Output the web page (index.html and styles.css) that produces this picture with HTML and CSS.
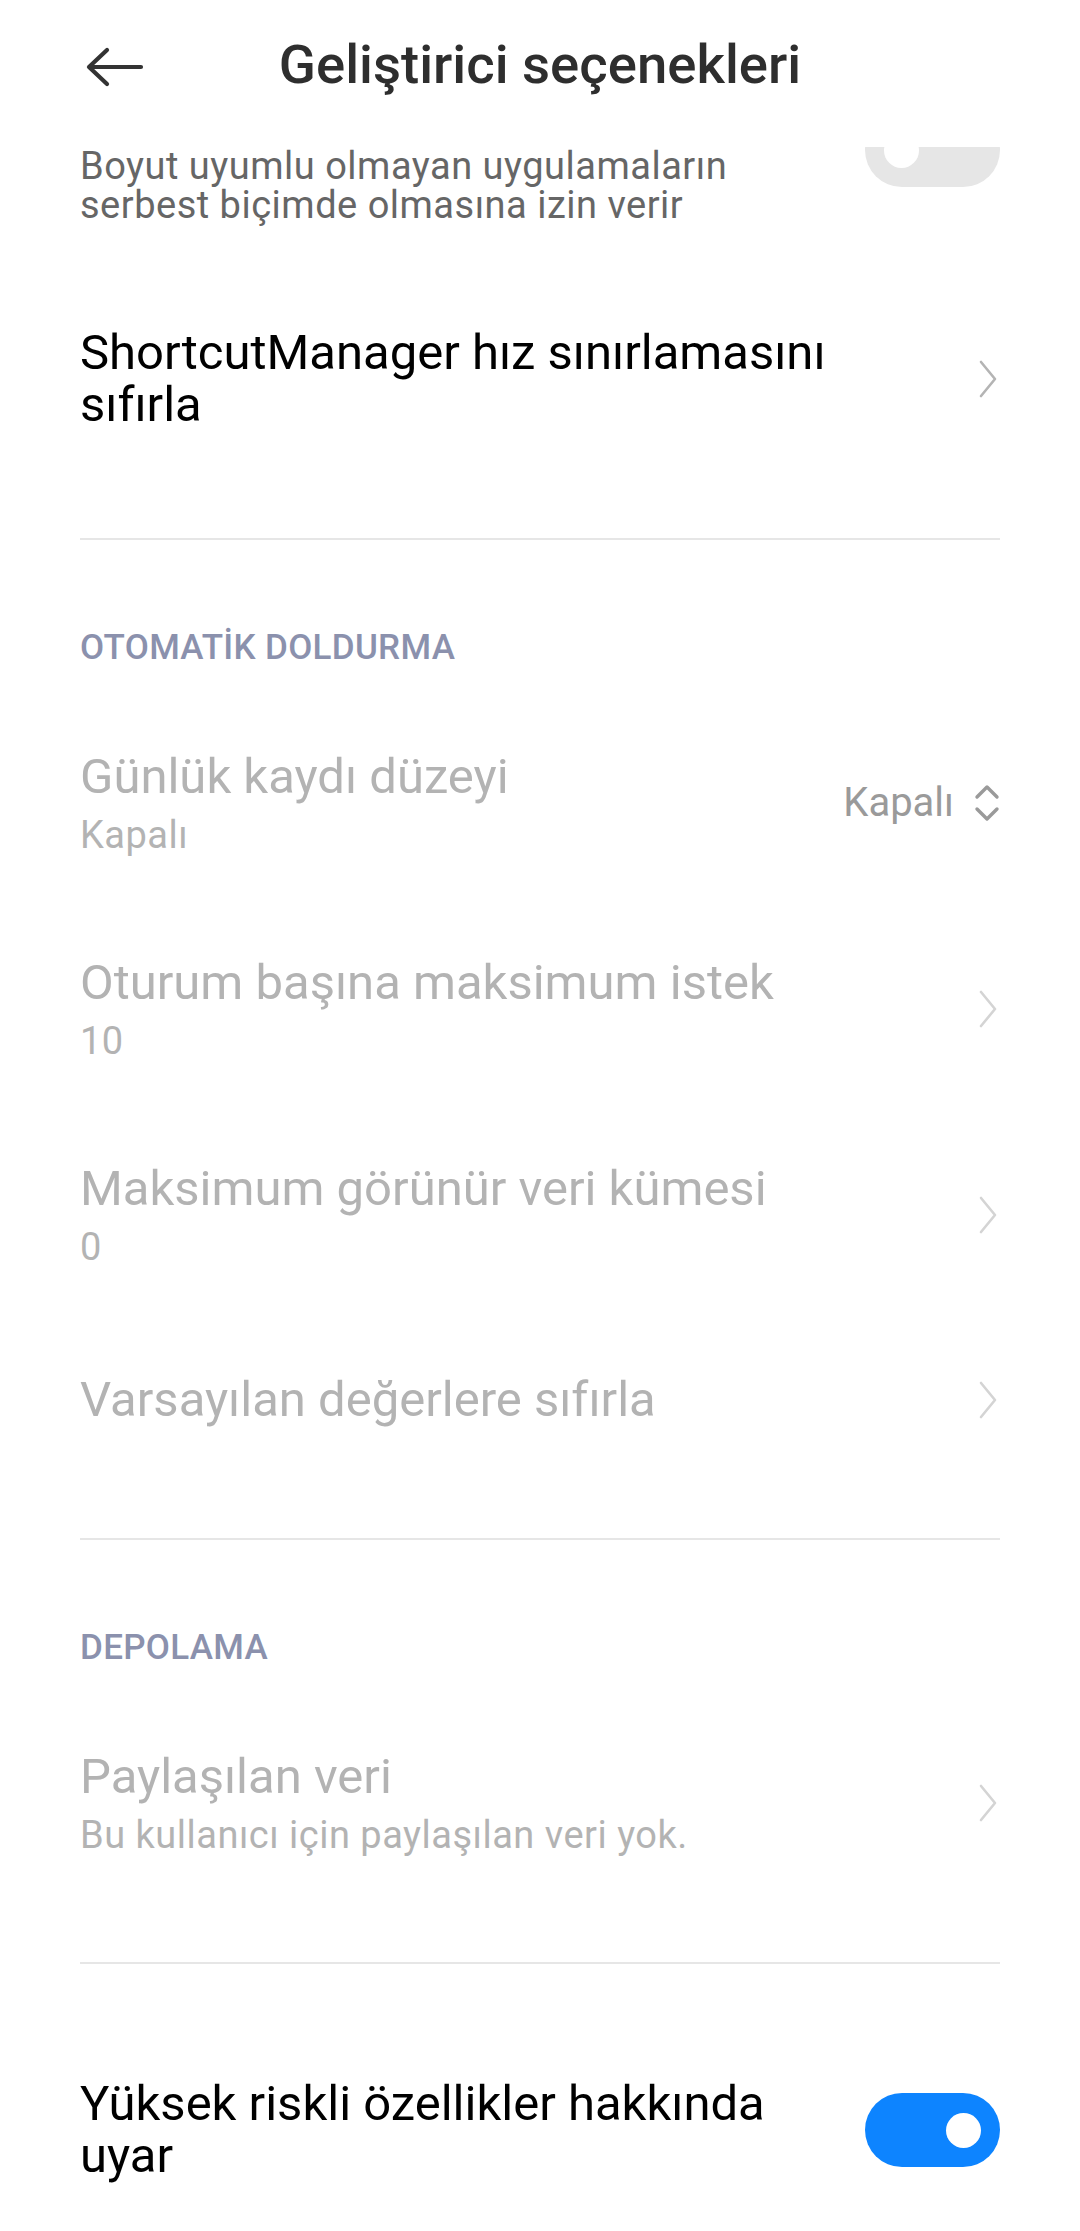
FILE: index.html
```html
<!DOCTYPE html>
<html lang="tr">
<head>
<meta charset="utf-8">
<title>Geliştirici seçenekleri</title>
<link rel="stylesheet" href="styles.css">
</head>
<body>
<div class="screen">
  <header class="appbar">
    <div class="appbar-left">
      <svg class="back" width="58" height="40" viewBox="0 0 58 40" aria-label="Geri">
        <path d="M3 20 H55 M21 3 L3 20 L21 37" fill="none" stroke="#333333" stroke-width="4.2" stroke-linecap="round" stroke-linejoin="round"/>
      </svg>
    </div>
    <h1 class="appbar-title">Geliştirici seçenekleri</h1>
    <div class="appbar-right"></div>
  </header>

  <main class="viewport">
    <div class="list">
      <section class="section">
        <div class="row row-first">
          <div class="row-text">
            <div class="row-sub">Boyut uyumlu olmayan uygulamaların serbest biçimde olmasına izin verir</div>
          </div>
          <div class="toggle toggle-off"><span class="knob"></span></div>
        </div>
        <div class="row row-nav">
          <div class="row-text">
            <div class="row-title">ShortcutManager hız sınırlamasını sıfırla</div>
          </div>
          <svg class="chev chev-active" width="22" height="38" viewBox="0 0 22 38"><path d="M4 2 L18 19 L4 36" fill="none" stroke-width="2.6" stroke-linecap="round" stroke-linejoin="round"/></svg>
        </div>
      </section>
      <hr class="divider">

      <section class="section">
        <h2 class="section-head">OTOMATİK DOLDURMA</h2>
        <div class="row disabled">
          <div class="row-text">
            <div class="row-title">Günlük kaydı düzeyi</div>
            <div class="row-sub">Kapalı</div>
          </div>
          <div class="row-value">
            <span class="value-text">Kapalı</span>
            <svg class="updown" width="26" height="40" viewBox="0 0 26 40"><path d="M3 14 L13 4 L23 14 M3 26 L13 36 L23 26" fill="none" stroke="#9a9a9a" stroke-width="3.4" stroke-linecap="round" stroke-linejoin="round"/></svg>
          </div>
        </div>
        <div class="row row-nav disabled">
          <div class="row-text">
            <div class="row-title">Oturum başına maksimum istek</div>
            <div class="row-sub">10</div>
          </div>
          <svg class="chev" width="22" height="38" viewBox="0 0 22 38"><path d="M4 2 L18 19 L4 36" fill="none" stroke-width="2.6" stroke-linecap="round" stroke-linejoin="round"/></svg>
        </div>
        <div class="row row-nav disabled">
          <div class="row-text">
            <div class="row-title">Maksimum görünür veri kümesi</div>
            <div class="row-sub">0</div>
          </div>
          <svg class="chev" width="22" height="38" viewBox="0 0 22 38"><path d="M4 2 L18 19 L4 36" fill="none" stroke-width="2.6" stroke-linecap="round" stroke-linejoin="round"/></svg>
        </div>
        <div class="row row-nav row-single disabled">
          <div class="row-text">
            <div class="row-title">Varsayılan değerlere sıfırla</div>
          </div>
          <svg class="chev" width="22" height="38" viewBox="0 0 22 38"><path d="M4 2 L18 19 L4 36" fill="none" stroke-width="2.6" stroke-linecap="round" stroke-linejoin="round"/></svg>
        </div>
      </section>
      <hr class="divider">

      <section class="section">
        <h2 class="section-head">DEPOLAMA</h2>
        <div class="row row-nav disabled">
          <div class="row-text">
            <div class="row-title">Paylaşılan veri</div>
            <div class="row-sub">Bu kullanıcı için paylaşılan veri yok.</div>
          </div>
          <svg class="chev" width="22" height="38" viewBox="0 0 22 38"><path d="M4 2 L18 19 L4 36" fill="none" stroke-width="2.6" stroke-linecap="round" stroke-linejoin="round"/></svg>
        </div>
      </section>
      <hr class="divider">

      <section class="section section-plain">
        <div class="row">
          <div class="row-text">
            <div class="row-title">Yüksek riskli özellikler hakkında uyar</div>
          </div>
          <div class="toggle toggle-on"><span class="knob"></span></div>
        </div>
      </section>
    </div>
  </main>
</div>
</body>
</html>
```

FILE: styles.css
```css
* { box-sizing: border-box; }

html, body {
  margin: 0;
  padding: 0;
  background: #ffffff;
}

body {
  font-family: Roboto, "Noto Sans", "Liberation Sans", sans-serif;
  color: #000000;
}

.screen {
  width: 1080px;
  height: 2231px;
  display: flex;
  flex-direction: column;
  overflow: hidden;
  background: #ffffff;
}

/* ---------- App bar ---------- */
.appbar {
  flex: 0 0 147px;
  display: grid;
  grid-template-columns: 1fr auto 1fr;
  align-items: start;
  padding-top: 32px;
  background: #ffffff;
}

.appbar-left {
  padding-left: 86px;
  padding-top: 15px;
}

.back { display: block; }

.appbar-title {
  margin: 0;
  font-size: 54.5px;
  line-height: 64px;
  font-weight: 500;
  color: #2e2e2e;
  white-space: nowrap;
}

/* ---------- Scroll viewport ---------- */
.viewport {
  flex: 1 1 auto;
  overflow: hidden;
}

.list {
  margin-top: -34px;
}

.section {
  padding-bottom: 56px;
}

.section-plain {
  padding-top: 63px;
  padding-bottom: 0;
}

.divider {
  margin: 0 80px;
  border: 0;
  height: 2px;
  background: #e6e6e6;
}

.section-head {
  margin: 86px 80px 0;
  padding-bottom: 30px;
  font-size: 35px;
  line-height: 44px;
  font-weight: 500;
  letter-spacing: 0.3px;
  color: #8b91ad;
}

/* ---------- Rows ---------- */
.row {
  display: flex;
  align-items: center;
  gap: 60px;
  padding: 51px 80px;
  min-height: 162px;
}

.row-nav {
  gap: 80px;
}

.row-first {
  align-items: flex-start;
  padding-top: 0;
}

.row-first .row-text {
  padding-top: 34px;
}

.row-single {
  min-height: 164px;
}

.row-text {
  flex: 1 1 auto;
  min-width: 0;
}

.row-title {
  font-size: 49px;
  line-height: 52px;
  font-weight: 400;
  color: #000000;
}

.row-sub {
  margin-top: 12px;
  font-size: 38px;
  line-height: 40px;
  letter-spacing: 0.5px;
  color: #666666;
}

.row-first .row-sub {
  margin-top: 0;
  line-height: 39px;
}

.disabled .row-title,
.disabled .row-sub {
  color: #b3b3b3;
}

.row-value {
  display: flex;
  align-items: center;
  gap: 20px;
  flex: 0 0 auto;
}

.value-text {
  font-size: 40px;
  line-height: 44px;
  color: #9a9a9a;
}

.updown { display: block; }

.chev {
  display: block;
  flex: 0 0 auto;
  margin-right: 1px;
  stroke: #d4d4d4;
}

.chev-active {
  stroke: #b4b4b4;
}

/* ---------- Toggles ---------- */
.toggle {
  flex: 0 0 135px;
  width: 135px;
  height: 74px;
  border-radius: 37px;
  display: flex;
  align-items: center;
  padding: 0 19px;
}

.toggle-on {
  background: #0d84ff;
  justify-content: flex-end;
}

.toggle-off {
  background: #e6e6e6;
  justify-content: flex-start;
}

.knob {
  width: 35px;
  height: 35px;
  border-radius: 50%;
  background: #ffffff;
}
```
